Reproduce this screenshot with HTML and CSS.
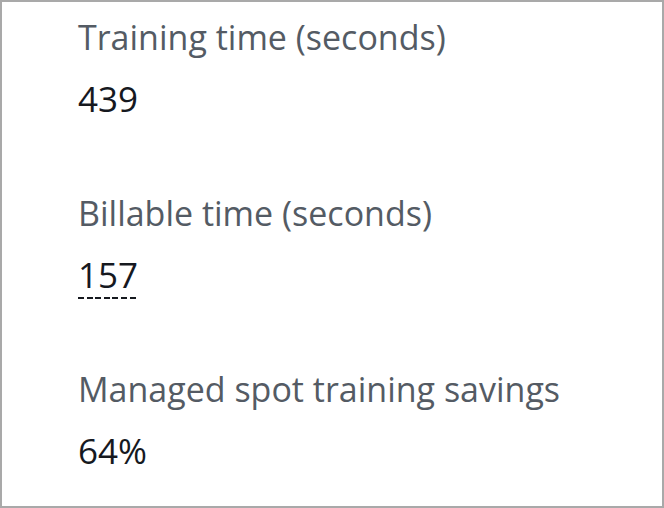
FILE: index.html
```html
<!DOCTYPE html>
<html>
<head>
<meta charset="utf-8">
<link rel="stylesheet" href="styles.css">
</head>
<body>
<div class="panel">
  <div class="kv">
    <div class="label">Training time (seconds)</div>
    <div class="value">439</div>
  </div>
  <div class="kv">
    <div class="label">Billable time (seconds)</div>
    <div class="value"><span class="dashed">157</span></div>
  </div>
  <div class="kv">
    <div class="label">Managed spot training savings</div>
    <div class="value">64%</div>
  </div>
</div>
</body>
</html>
```
FILE: styles.css
```css
html, body {
  margin: 0;
  padding: 0;
  background: #fff;
}
.panel {
  box-sizing: border-box;
  width: 664px;
  height: 508px;
  border: 2px solid #a9a9a9;
  padding: 13px 0 0 76px;
  display: flex;
  flex-direction: column;
  gap: 70px;
  font-family: "Open Sans", sans-serif;
  font-size: 34px;
  line-height: 44px;
}
.kv {
  display: flex;
  flex-direction: column;
  gap: 18px;
}
.label {
  color: #545b64;
}
.value {
  color: #16191f;
  font-size: 35px;
}
.dashed {
  padding-bottom: 1px;
  background-image: repeating-linear-gradient(90deg, #16191f 0 6px, transparent 6px 8.6px);
  background-size: 100% 2px;
  background-repeat: no-repeat;
  background-position: left bottom;
}
```
